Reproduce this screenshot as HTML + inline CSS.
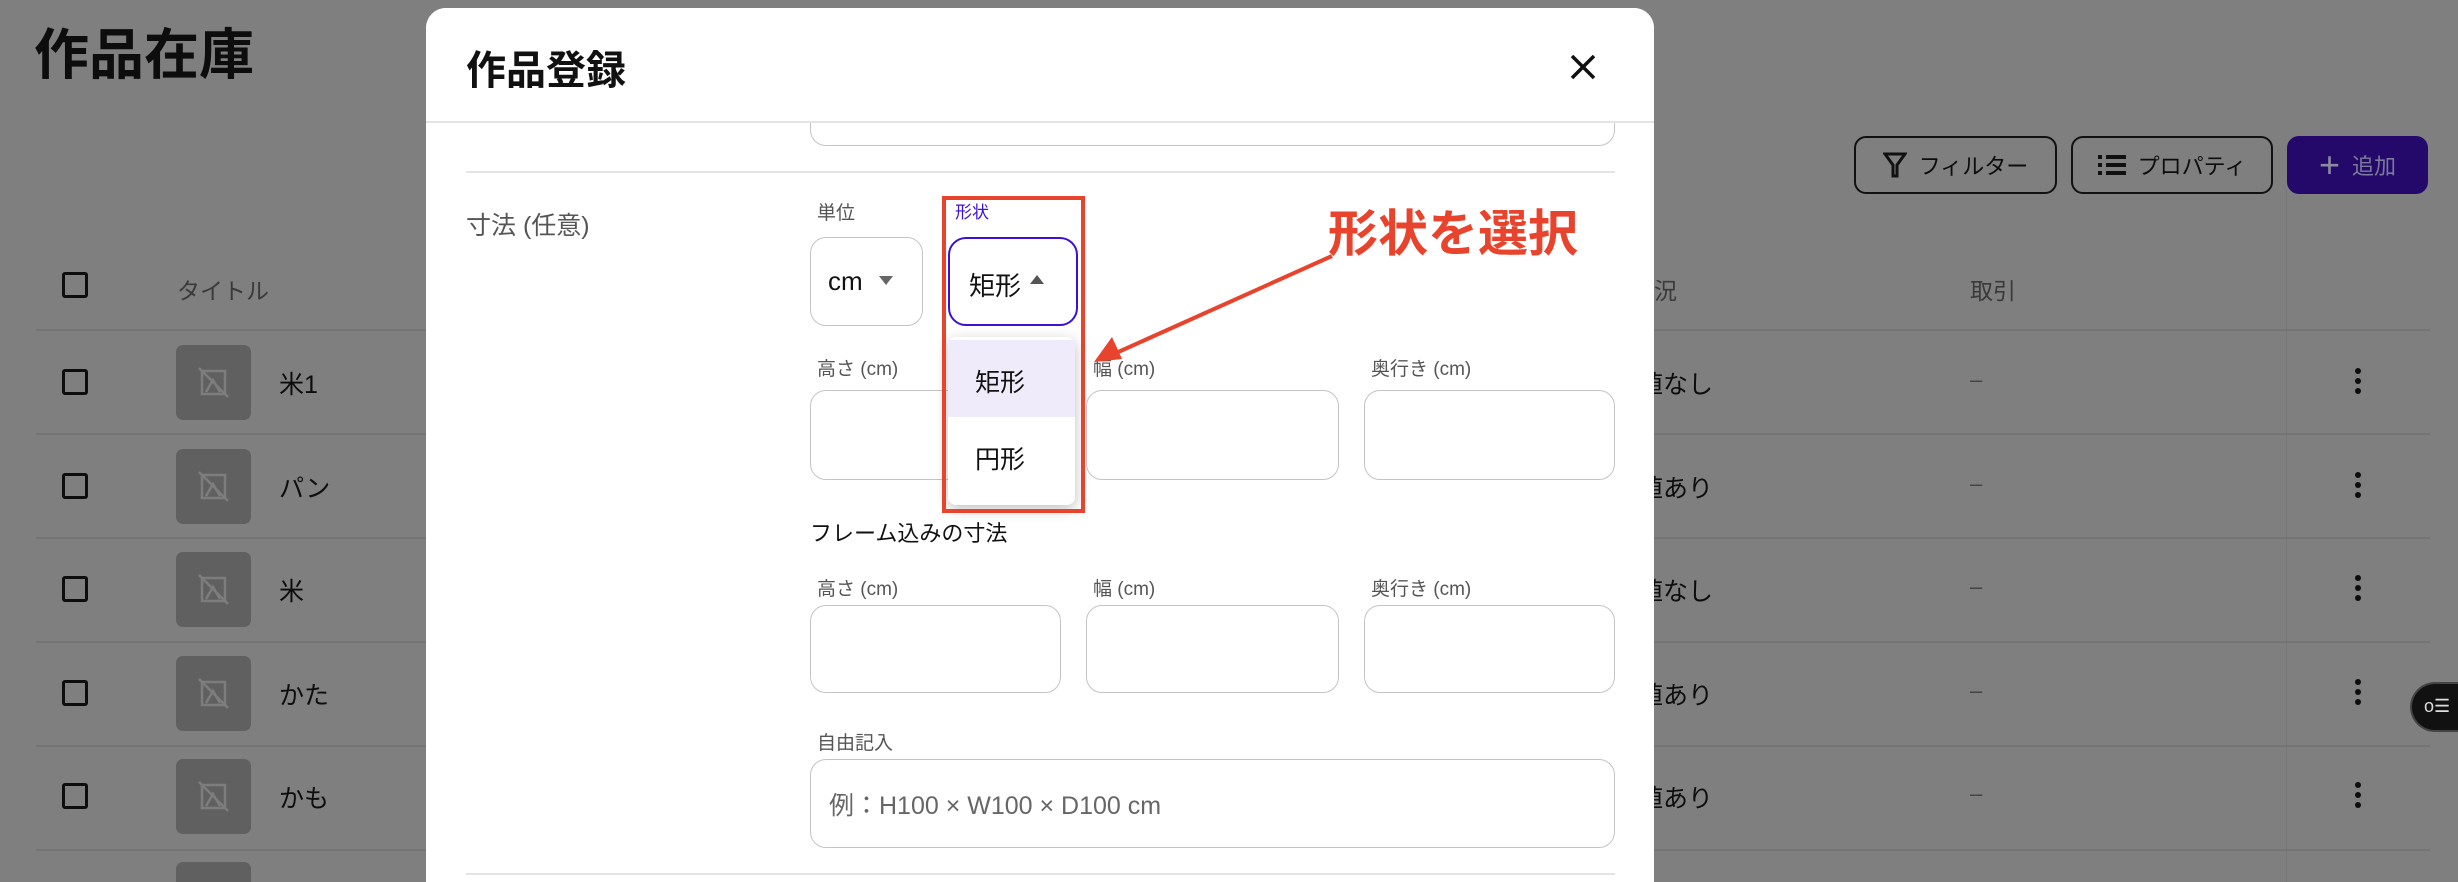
<!DOCTYPE html>
<html style="overflow:hidden;height:882px"><head><meta charset="utf-8"><style>
*{margin:0;padding:0;box-sizing:border-box}
body{width:2458px;height:882px;overflow:hidden;background:#7f7f7f;font-family:"Liberation Sans","Noto Sans CJK JP",sans-serif;position:relative;color:#0d0d0d}
.a{position:absolute}
.cb{position:absolute;left:62px;width:26px;height:26px;border:3px solid #0d0d0d;border-radius:3px}
.th{position:absolute;left:176px;width:75px;height:75px;background:#606060;border-radius:7px}
.th svg{position:absolute;left:20px;top:20px}
.nm{position:absolute;left:279px;font-size:25px}
.hl{position:absolute;left:36px;width:2394px;height:2px;background:#747474}
.dots{position:absolute;left:2355px;width:8px}
.dots i{display:block;width:6px;height:6px;border-radius:3px;background:#0d0d0d;margin:0 0 4px}
.btn{position:absolute;top:136px;height:58px;border:2px solid #111;border-radius:12px;font-size:22px;display:flex;align-items:center;justify-content:center;gap:12px}
.lbl{position:absolute;font-size:19px;color:#555}
.inp{position:absolute;border:1.5px solid #c4c4c4;border-radius:16px;background:#fff}
</style></head><body>
<div class="a" style="left:34px;top:10px;font-size:55px;font-weight:bold">作品在庫</div>

<div class="btn" style="left:1854px;width:203px"><svg width="24" height="28" viewBox="0 0 24 28"><path d="M2 3h20l-8 11v11h-4V14z" fill="none" stroke="#111" stroke-width="3"/></svg>フィルター</div>
<div class="btn" style="left:2071px;width:202px"><svg width="28" height="22" viewBox="0 0 28 22"><path d="M0 3h4M8 3h20M0 11h4M8 11h20M0 19h4M8 19h20" stroke="#111" stroke-width="4"/></svg>プロパティ</div>
<div class="btn" style="left:2287px;width:141px;background:#24096b;border-color:#24096b;color:#7a7a9a"><span style="font-size:36px;font-weight:300;color:#8a8aa0">+</span>追加</div>

<div class="cb" style="top:272px"></div>
<div class="a" style="left:177px;top:272px;font-size:23px;color:#3a3a3a">タイトル</div>
<div class="a" style="left:1654px;top:272px;font-size:23px;color:#3a3a3a">況</div>
<div class="a" style="left:1970px;top:272px;font-size:23px;color:#3a3a3a">取引</div>
<div class="a" style="left:2286px;top:190px;width:1px;height:692px;background:#777"></div>
<div class="hl" style="top:329px"></div>
<div class="hl" style="top:433px"></div>
<div class="hl" style="top:537px"></div>
<div class="hl" style="top:641px"></div>
<div class="hl" style="top:745px"></div>
<div class="hl" style="top:849px"></div>

<div id="rows"></div>
<script>
var names=["米1","パン","米","かた","かも"],vals=["値なし","値あり","値なし","値あり","値あり"];
var h="";
for(var i=0;i<5;i++){var c=382+i*103.5;
h+='<div class="cb" style="top:'+(c-13)+'px"></div>';
h+='<div class="th" style="top:'+(c-37)+'px"><svg width="35" height="35" viewBox="0 0 35 35"><path d="M6 6h23v23H6zM3 3l29 29M10 27l7-12 7 12" fill="none" stroke="#7d7d7d" stroke-width="2.5"/></svg></div>';
h+='<div class="nm" style="top:'+(c-17)+'px">'+names[i]+'</div>';
h+='<div class="a" style="left:1638px;top:'+(c-17)+'px;font-size:25px">'+vals[i]+'</div>';
h+='<div class="a" style="left:1970px;top:'+(c-15)+'px;font-size:22px;color:#444">–</div>';
h+='<div class="dots" style="top:'+(c-14)+'px"><i></i><i></i><i></i></div>';
}
document.getElementById("rows").innerHTML=h;
</script>
<div class="a" style="left:176px;top:862px;width:75px;height:20px;background:#606060;border-radius:7px 7px 0 0"></div>

<div class="a" style="left:2410px;top:682px;width:48px;height:50px;border-radius:25px 0 0 25px;background:#111;border:2px solid #444;border-right:none"></div>
<div class="a" style="left:2424px;top:696px;color:#ddd;font-size:18px">o☰</div>

<!-- modal -->
<div class="a" style="left:426px;top:8px;width:1228px;height:874px;background:#fff;border-radius:20px 20px 0 0;overflow:hidden">
 <div class="inp" style="left:384px;top:60px;width:805px;height:78px"></div>
 <div class="a" style="left:0;top:0;width:1228px;height:115px;background:#fff;border-bottom:2px solid #e4e4e4"></div>
 <div class="a" style="left:40px;top:30px;font-size:40px;font-weight:bold;color:#111">作品登録</div>
 <svg class="a" style="left:1144px;top:46px" width="26" height="26" viewBox="0 0 26 26"><path d="M2 2l22 22M24 2L2 24" stroke="#111" stroke-width="3.5"/></svg>
 <div class="a" style="left:40px;top:163px;width:1149px;height:2px;background:#e4e4e4"></div>
 <div class="a" style="left:40px;top:198px;font-size:25px;color:#555">寸法 (任意)</div>

 <div class="lbl" style="left:391px;top:190px">単位</div>
 <div class="inp" style="left:384px;top:229px;width:113px;height:89px"></div>
 <div class="a" style="left:402px;top:258px;font-size:26px;color:#111">cm</div>
 <div class="a" style="left:453px;top:268px;border:7px solid transparent;border-top:9px solid #666"></div>

 <div class="a" style="left:529px;top:190px;font-size:17px;color:#3d10d6">形状</div>
 <div class="a" style="left:522px;top:229px;width:130px;height:89px;border:2.5px solid #3d10d6;border-radius:18px"></div>
 <div class="a" style="left:543px;top:258px;font-size:26px;color:#111">矩形</div>
 <div class="a" style="left:604px;top:260px;border:7px solid transparent;border-bottom:9px solid #555"></div>

 <div class="lbl" style="left:391px;top:346px">高さ (cm)</div>
 <div class="lbl" style="left:667px;top:346px">幅 (cm)</div>
 <div class="lbl" style="left:945px;top:346px">奥行き (cm)</div>
 <div class="inp" style="left:384px;top:382px;width:251px;height:90px"></div>
 <div class="inp" style="left:660px;top:382px;width:253px;height:90px"></div>
 <div class="inp" style="left:938px;top:382px;width:251px;height:90px"></div>

 <div class="a" style="left:522px;top:329px;width:127px;height:168px;background:#fff;border-radius:8px;box-shadow:0 4px 14px rgba(0,0,0,.25)"></div>
 <div class="a" style="left:522px;top:332px;width:127px;height:77px;background:#efebfa"></div>
 <div class="a" style="left:549px;top:355px;font-size:25px;color:#111">矩形</div>
 <div class="a" style="left:549px;top:432px;font-size:25px;color:#111">円形</div>
 <div class="a" style="left:516px;top:188px;width:143px;height:317px;border:4px solid #e8432d"></div>

 <div class="a" style="left:384px;top:508px;font-size:22px;color:#111">フレーム込みの寸法</div>
 <div class="lbl" style="left:391px;top:566px">高さ (cm)</div>
 <div class="lbl" style="left:667px;top:566px">幅 (cm)</div>
 <div class="lbl" style="left:945px;top:566px">奥行き (cm)</div>
 <div class="inp" style="left:384px;top:597px;width:251px;height:88px"></div>
 <div class="inp" style="left:660px;top:597px;width:253px;height:88px"></div>
 <div class="inp" style="left:938px;top:597px;width:251px;height:88px"></div>

 <div class="lbl" style="left:391px;top:720px">自由記入</div>
 <div class="inp" style="left:384px;top:751px;width:805px;height:89px"></div>
 <div class="a" style="left:403px;top:778px;font-size:25px;color:#666">例：H100 × W100 × D100 cm</div>
 <div class="a" style="left:40px;top:865px;width:1149px;height:2px;background:#e4e4e4"></div>

 <div class="a" style="left:902px;top:186px;font-size:50px;font-weight:bold;color:#e8432d">形状を選択</div>
 <svg class="a" style="left:0;top:0" width="1228" height="874"><line x1="906" y1="248" x2="690" y2="345" stroke="#e8432d" stroke-width="4"/><path d="M668 354l18-25 10 22z" fill="#e8432d"/></svg>
</div>
</body></html>
